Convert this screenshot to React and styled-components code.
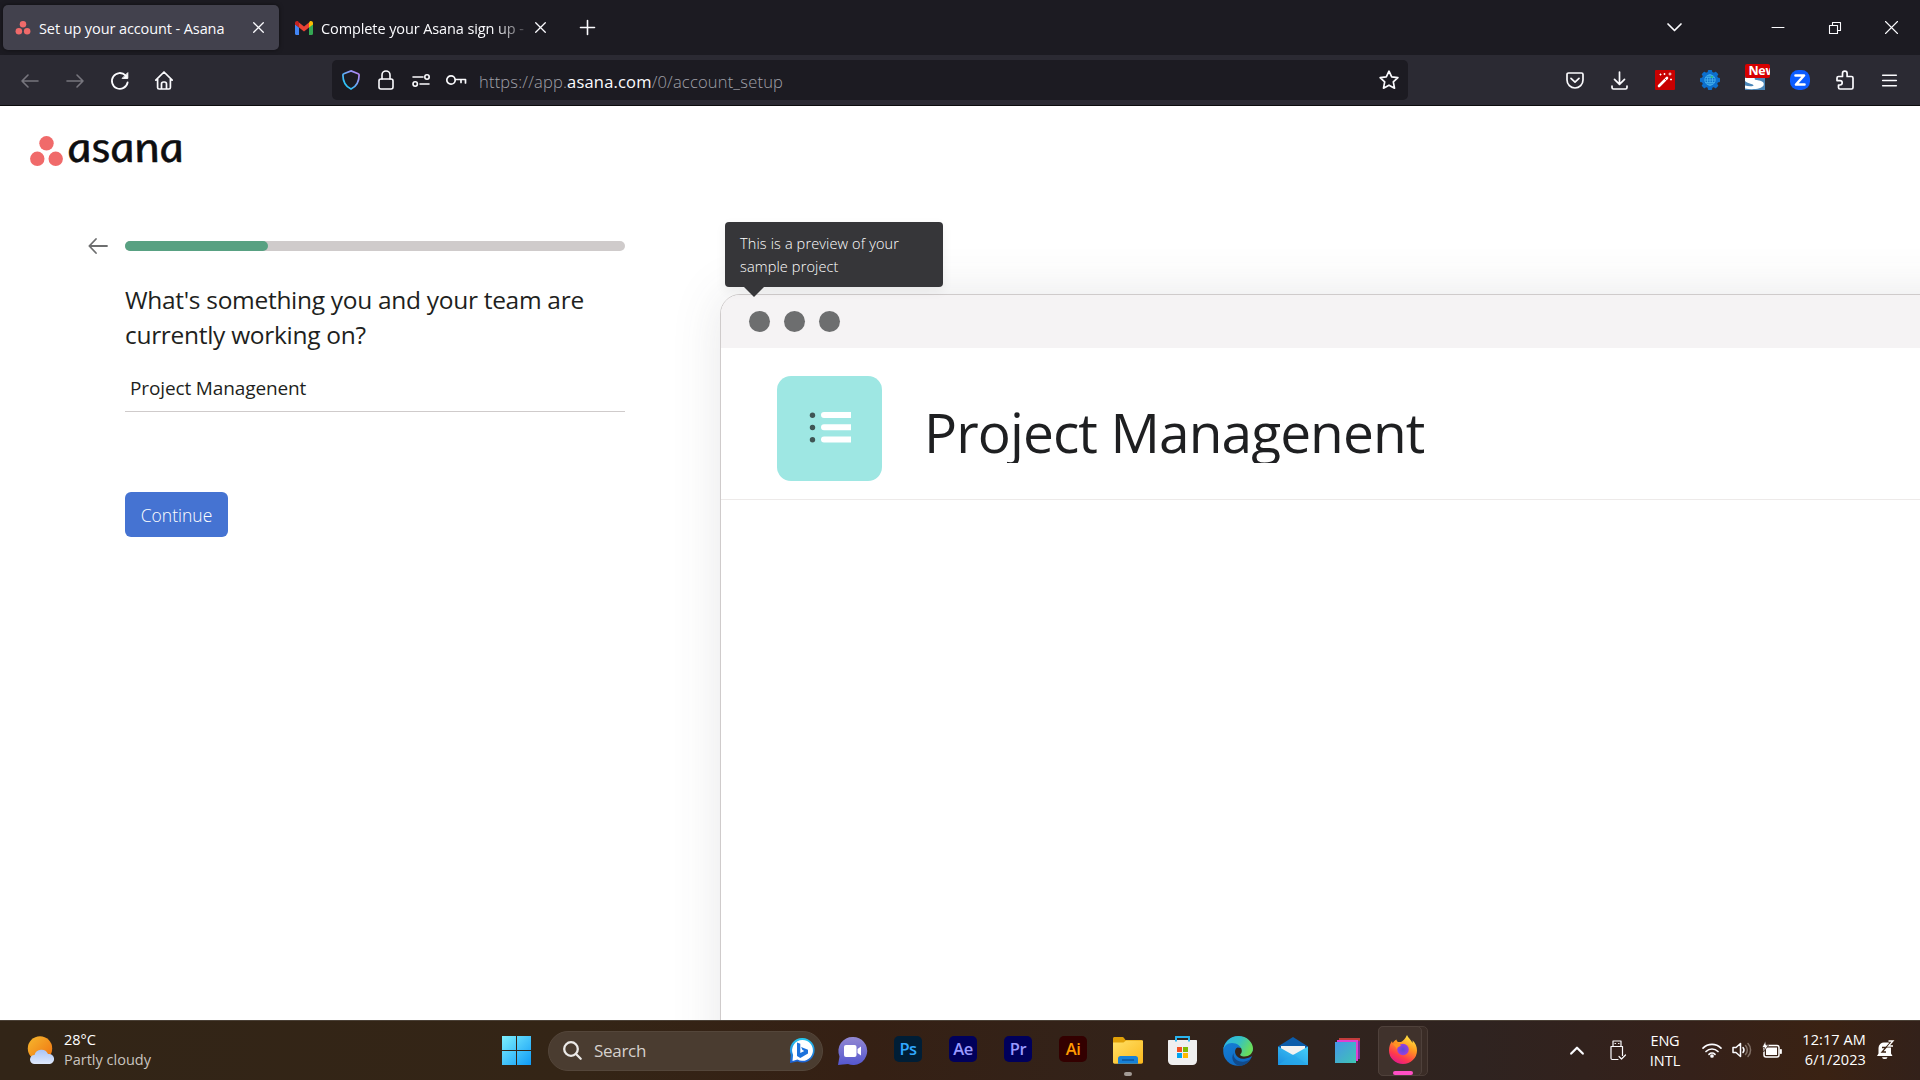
import React from "react";
import styled, { createGlobalStyle } from "styled-components";

const Global = createGlobalStyle`
  * { box-sizing: border-box; }
  body { margin: 0; background: #fff; overflow: hidden; }
  svg { display: block; flex: none; overflow: visible; }
`;

const Screen = styled.div`
  width: 1920px;
  height: 1080px;
  display: flex;
  flex-direction: column;
  overflow: hidden;
  font-family: "Open Sans", "Noto Sans", sans-serif;
`;

/* ---------- text ---------- */
const Label = styled.span`
  display: block;
  white-space: nowrap;
  font-size: ${(p) => p.$size}px;
  line-height: ${(p) => p.$lh || 20}px;
  letter-spacing: ${(p) => p.$ls || 0}px;
  color: ${(p) => p.$color || "#fff"};
  font-weight: ${(p) => p.$weight || 400};
`;

/* ---------- tab strip ---------- */
const TabStrip = styled.div`
  height: 55px;
  flex: none;
  background: #1c1b22;
  display: flex;
  align-items: center;
  padding-left: 3px;
`;
const Tab = styled.div`
  width: ${(p) => p.$width}px;
  height: 45px;
  display: flex;
  align-items: center;
  padding-left: ${(p) => p.$pad}px;
  border-radius: 5px;
  background: ${(p) => (p.$active ? "#42414d" : "transparent")};
  box-shadow: ${(p) => (p.$active ? "0 0 4px rgba(0,0,0,.5)" : "none")};
`;
const TabTitle = styled(Label)`
  width: ${(p) => p.$width}px;
  overflow: hidden;
  margin-left: 8px;
  padding-top: 2px;
  mask-image: ${(p) => (p.$fade ? "linear-gradient(90deg,#000 84%,transparent 102%)" : "none")};
`;
const WindowControls = styled.div`
  margin-left: auto;
  display: grid;
  align-items: center;
  justify-items: center;
  grid-template-columns: 150px 57px 57px 57px;
`;

/* ---------- toolbar ---------- */
const Toolbar = styled.div`
  height: 51px;
  flex: none;
  background: #2b2a33;
  border-bottom: 1px solid #0c0c0d;
  display: flex;
  align-items: center;
`;
const NavButtons = styled.div`
  width: 332px;
  display: flex;
  padding: 1px 0 0 7px;
`;
const IconCell = styled.div`
  width: ${(p) => p.$w || 45}px;
  height: 40px;
  display: flex;
  align-items: center;
  justify-content: center;
`;
const UrlBar = styled.div`
  width: 1076px;
  height: 40px;
  border-radius: 5px;
  background: #1c1b22;
  display: flex;
  align-items: center;
  padding-left: 1px;
`;
const UrlText = styled(Label)`
  margin-left: 5px;
  padding-top: 3px;
  flex: 1;
  b { font-weight: 400; color: #fbfbfe; }
`;
const Extensions = styled.div`
  margin-left: auto;
  display: flex;
  padding-right: 8px;
`;

/* ---------- page ---------- */
const Page = styled.main`
  height: 914px;
  flex: none;
  display: flex;
  overflow: hidden;
  background: #fff;
`;
const FormColumn = styled.section`
  width: 720px;
  flex: none;
`;
const Brand = styled.div`
  display: flex;
  height: 72px;
  padding: 30px 0 0 30px;
`;
const BrandName = styled.span`
  margin-left: 6px;
  font-family: Lato, sans-serif;
  font-style: italic;
  font-weight: 400;
  font-size: 42.5px;
  line-height: 20px;
  transform: scaleX(1.11) skewX(8deg);
  transform-origin: 0 24px;
  -webkit-text-stroke: 0.5px #0d0e10;
  color: #0d0e10;
`;
const StepRow = styled.div`
  display: flex;
  align-items: center;
  margin-top: 58px;
  height: 20px;
  padding-left: 88px;
  gap: 17px;
`;
const Track = styled.div`
  width: 500px;
  height: 10px;
  border-radius: 5px;
  background: #cfcbcb;
`;
const Fill = styled.div`
  width: 143px;
  height: 10px;
  border-radius: 5px;
  background: #58a182;
`;
const FormBody = styled.div`
  width: 500px;
  margin-left: 125px;
`;
const Question = styled.h1`
  margin: 26px 0 0;
  font-size: 24.5px;
  font-weight: 400;
  line-height: 35px;
  letter-spacing: ${(p) => p.$ls}px;
  color: #1e1f21;
  white-space: nowrap;
`;
const Field = styled.div`
  height: 48px;
  margin-top: 12px;
  padding: 12px 0 0 5px;
  border-bottom: 1px solid #cfcbcb;
`;
const Submit = styled.button`
  margin: 80px 0 0;
  width: 103px;
  height: 45px;
  padding: 0;
  border: 0;
  border-radius: 6px;
  background: #4573d2;
  display: flex;
  align-items: center;
  justify-content: center;
  font-family: inherit;
`;
const PreviewColumn = styled.section`
  flex: 1;
  padding-top: 188px;
  position: relative;
`;
const PreviewWindow = styled.div`
  width: 1300px;
  height: 900px;
  border: 1px solid #cfcbcb;
  border-radius: 20px 0 0 0;
  overflow: hidden;
  background: #fff;
  box-shadow: 0 0 50px rgba(80, 80, 82, 0.13);
`;
const PreviewBar = styled.div`
  height: 53px;
  background: #f5f3f4;
  display: flex;
  align-items: center;
  gap: 14px;
  padding-left: 28px;
`;
const Dot = styled.i`
  width: 21px;
  height: 21px;
  border-radius: 50%;
  background: #6d6e6f;
`;
const ProjectHeader = styled.div`
  height: 152px;
  border-bottom: 1px solid #edeae9;
  display: flex;
  padding: 28px 0 0 56px;
`;
const ProjectTile = styled.div`
  width: 105px;
  height: 105px;
  border-radius: 14px;
  background: #9ee7e3;
  display: flex;
  align-items: center;
  justify-content: center;
  padding-bottom: 2px;
`;
const ProjectTitle = styled.div`
  margin: 20px 0 0 42px;
  height: 67px;
  overflow: hidden;
  font-size: 55px;
  line-height: 71px;
  letter-spacing: ${(p) => p.$ls}px;
  color: #1e1f21;
  white-space: nowrap;
`;
const Tooltip = styled.div`
  position: absolute;
  left: 5px;
  top: 116px;
  width: 218px;
  height: 65px;
  padding: 10px 15px;
  border-radius: 4px;
  background: #363639;
  box-shadow: 0 4px 12px rgba(0, 0, 0, 0.06);
  &::after {
    content: "";
    position: absolute;
    left: 19px;
    top: 65px;
    border: 10.5px solid transparent;
    border-bottom: 0;
    border-top-color: #363639;
  }
`;

/* ---------- taskbar ---------- */
const Taskbar = styled.footer`
  height: 60px;
  flex: none;
  border-top: 1px solid #4a4036;
  background: linear-gradient(90deg, #322517 0%, #342516 30%, #352014 45%, #33231a 60%, #2f2320 77%, #35211a 88%, #3a2213 95%, #33211a 100%);
  display: flex;
`;
const Weather = styled.div`
  width: 489px;
  display: flex;
  padding: 8px 0 0 27px;
  gap: 9px;
`;
const Stack = styled.div`
  display: flex;
  flex-direction: column;
  align-items: ${(p) => p.$align || "flex-start"};
  padding-top: ${(p) => p.$top || 0}px;
  justify-self: ${(p) => (p.$align === "flex-end" ? "end" : "center")};
`;
const Apps = styled.div`
  display: flex;
  align-items: center;
  width: 945px;
`;
const AppCell = styled.div`
  width: 55px;
  height: 58px;
  flex: none;
  display: flex;
  align-items: center;
  justify-content: center;
  position: relative;
`;
const Running = styled.i`
  position: absolute;
  bottom: ${(p) => (p.$flush ? 0 : 4)}px;
  width: ${(p) => p.$w}px;
  height: 4px;
  border-radius: 2px;
  background: ${(p) => p.$color};
`;
const SearchPill = styled.div`
  width: 275px;
  height: 40px;
  margin: 0 2px 0 4px;
  flex: none;
  border-radius: 20px;
  border: 1px solid #54463a;
  background: #4a3c30;
  display: flex;
  align-items: center;
  padding: 0 7px 0 14px;
`;
const SearchText = styled(Label)`
  flex: 1;
  margin-left: 12px;
`;
const AdobeTile = styled.div`
  width: 28px;
  height: 26px;
  margin: 0 0 3px 1px;
  border-radius: 5px;
  background: ${(p) => p.$bg};
  color: ${(p) => p.$fg};
  font-size: 16.5px;
  font-weight: 600;
  line-height: 25px;
  text-align: center;
  letter-spacing: -0.5px;
`;
const ActiveApp = styled.div`
  width: 50px;
  height: 50px;
  margin-left: 3px;
  border-radius: 5px;
  border: 1px solid #4b3d37;
  background: #3a2c26;
  display: flex;
`;
const ActiveFace = styled.div`
  width: 44px;
  height: 50px;
  margin: -1px 0 0 -1px;
  padding: 0 0 2px 5px;
  border-radius: 5px;
  border: 1px solid #4f413b;
  background: #40322c;
  display: flex;
  align-items: center;
  justify-content: center;
  position: relative;
`;
const Tray = styled.div`
  flex: 1;
  display: grid;
  grid-template-columns: 50px 32px 62px 32px 28px 32px 78px 38px;
  padding-left: 118px;
  align-items: center;
  height: 58px;
  justify-items: center;
`;

/* ---------- icons ---------- */
const Ic = ({ w = 20, h = w, vb, c = "#fbfbfe", sw = 1.6, children }) => (
  <svg width={w} height={h} viewBox={vb || `0 0 ${w} ${h}`} fill="none" stroke={c} strokeWidth={sw} strokeLinecap="round" strokeLinejoin="round">
    {children}
  </svg>
);
const AsanaDots = ({ w, h }) => (
  <svg width={w} height={h} viewBox="0 0 33 31" fill="#f06a6a">
    <circle cx="16.5" cy="7.3" r="7.2" /><circle cx="7.3" cy="22.8" r="7.2" /><circle cx="25.7" cy="22.8" r="7.2" />
  </svg>
);
const Close = () => <Ic w={11} sw={1.3}><path d="M.7.7l9.6 9.6M10.3.7L.7 10.3" /></Ic>;
const Gmail = () => (
  <svg width="18" height="14" viewBox="0 0 18 14">
    <path d="M0 2v10.8c0 .7.5 1.2 1.2 1.2H4V6.5L0 3z" fill="#4285f4" />
    <path d="M14 14h2.8c.7 0 1.2-.5 1.2-1.2V2l-4 3z" fill="#34a853" />
    <path d="M14 1.6v5L18 3.600V2c0-1.900-2-2.700-3.300-1.600z" fill="#fbbc04" />
    <path d="M4 6.600V1.600l5 3.800 5-3.800v5l-5 3.800z" fill="#ea4335" />
    <path d="M0 2v1.600l4 3v-5L3.300.4C2-.7 0 .1 0 2z" fill="#c5221f" />
  </svg>
);

function Tabs() {
  return (
    <TabStrip>
      <Tab $active $width={276} $pad={12}>
        <AsanaDots w={16} h={14} />
        <TabTitle $size={14.5} $width={214} $color="#fbfbfe" $ls={-0.1}>Set up your account - Asana</TabTitle>
        <Close />
      </Tab>
      <Tab $width={285} $pad={16}>
        <Gmail />
        <TabTitle $size={14.5} $width={207} $color="#fbfbfe" $ls={-0.1} $fade>Complete your Asana sign up - </TabTitle>
        <IconCell $w={25}><Close /></IconCell>
      </Tab>
      <IconCell $w={47}><Ic w={15} sw={1.6}><path d="M7.500.5v14M.5 7.500h14" /></Ic></IconCell>
      <WindowControls>
        <Ic w={15} h={9} sw={1.7}><path d="M1 1l6.500 6.500L14 1" /></Ic>
        <Ic w={12} h={12} sw={1}><path d="M0 5.500h12" /></Ic>
        <Ic w={12} h={12} sw={1.1}><path d="M.5 3.500h8v8h-8zM3.500 3.500v-3h8v8h-3" /></Ic>
        <Ic w={13} h={13} sw={1.1}><path d="M.5.5l12 12M12.500.5l-12 12" /></Ic>
      </WindowControls>
    </TabStrip>
  );
}

function BrowserToolbar() {
  return (
    <Toolbar>
      <NavButtons>
        <IconCell><Ic w={18} h={14} c="#77767e"><path d="M17 7H1M7 1L1 7l6 6" /></Ic></IconCell>
        <IconCell><Ic w={18} h={14} c="#77767e"><path d="M1 7h16M11 1l6 6-6 6" /></Ic></IconCell>
        <IconCell><Ic w={18} h={18} sw={1.8}><path d="M16.600 10.500A7.900 7.900 0 1 1 14.500 3.400" /><path d="M16.800 1v5.400h-5.300z" fill="#fbfbfe" strokeWidth="1" /></Ic></IconCell>
        <IconCell $w={44}><Ic w={18} h={19} sw={1.700}><path d="M.8 9.200L9 1l8.200 8.200M2.600 8v8.500c0 .9.6 1.500 1.500 1.500h9.800c.9 0 1.500-.6 1.500-1.500V8M6.500 18v-5c0-1.200.8-2 2-2h1c1.200 0 2 .8 2 2v5" /></Ic></IconCell>
      </NavButtons>
      <UrlBar>
        <IconCell $w={36}>
          <svg width="18" height="20" viewBox="0 0 18 20"><defs><linearGradient id="sh" x1="0" y1="1" x2="1" y2="0"><stop offset=".2" stopColor="#2bc4f8" /><stop offset=".9" stopColor="#b487f5" /></linearGradient></defs><path d="M9 .9l7.200 2.900c.6.200.9.600.9 1.200C17.100 12 14.500 16.500 9 19.100 3.500 16.500.9 12 .9 5c0-.6.300-1 .9-1.200z" fill="none" stroke="url(#sh)" strokeWidth="1.700" /></svg>
        </IconCell>
        <IconCell $w={34}><Ic w={16} h={20} sw={1.600}><rect x="1" y="9" width="14" height="10" rx="2" /><path d="M4 9V5a4 4 0 0 1 8 0v4" /></Ic></IconCell>
        <IconCell $w={35}><Ic w={18} h={13}><path d="M1 3h10M8 10h9" /><circle cx="15" cy="3" r="2.200" /><circle cx="3.200" cy="10" r="2.200" /></Ic></IconCell>
        <IconCell $w={36}><Ic w={20} h={10} sw={1.700}><circle cx="5" cy="5" r="4.200" /><path d="M9.500 4.500h10V8M15 4.500v3" /></Ic></IconCell>
        <UrlText $size={16.500} $weight={300} $color="#a0a0a8" $ls={0.19}>https://app.<b>asana.com</b>/0/account_setup</UrlText>
        <IconCell $w={38}><Ic w={20} h={20} sw={1.700}><path d="M10 1.200l2.700 5.700 6.200.8-4.600 4.200 1.200 6.300-5.500-3-5.500 3 1.200-6.300L1.100 7.700l6.200-.8z" /></Ic></IconCell>
      </UrlBar>
      <Extensions>
        <IconCell><Ic w={18} h={17} sw={1.700}><path d="M2.500 1h13c.9 0 1.500.6 1.500 1.500V8a8 8 0 0 1-16 0V2.500C1 1.600 1.600 1 2.500 1zM5 6.300l4 3.900 4-3.900" /></Ic></IconCell>
        <IconCell><Ic w={17} h={19} sw={1.700}><path d="M8.500 1v12M3.500 8.300l5 5 5-5M1 15v1.500c0 .9.6 1.500 1.500 1.500h12c.9 0 1.500-.6 1.500-1.500V15" /></Ic></IconCell>
        <IconCell>
          <svg width="20" height="20"><rect width="20" height="20" fill="#c80000" rx="1" /><path d="M4 16l8-8" stroke="#fff" strokeWidth="2.600" strokeLinecap="round" /><path d="M9.500 8.500l2 2" stroke="#c80000" strokeWidth=".8" /><path d="M5.500 3.500v2M4.500 4.500h2M9.500 3v2M8.500 4h2M15 2.500v3M13.500 4h3M16 8.500v2M15 9.500h2" stroke="#fff" strokeWidth=".9" /></svg>
        </IconCell>
        <IconCell>
          <svg width="20" height="20" viewBox="-10 -10 20 20"><circle r="8.300" fill="#0c6fcd" /><g fill="#0c6fcd">{[0, 45, 90, 135, 180, 225, 270, 315].map((a) => <rect key={a} x="-2.200" y="-10" width="4.400" height="5" rx="1" transform={`rotate(${a})`} />)}</g><g fill="none" stroke="#45b0ec" strokeWidth=".9"><circle r="5.200" /><path d="M-5 0H5M0-5V5M-4.400-2.600h8.800M-4.400 2.600h8.800" /><ellipse rx="2.500" ry="5.200" /></g><circle cx="1.800" cy="-3" r="1" fill="#29c76f" /></svg>
        </IconCell>
        <IconCell>
          <svg width="20" height="20"><defs><clipPath id="badge"><rect x="0" y="-6" width="25" height="14" rx="2" /></clipPath></defs><rect width="20" height="20" fill="#4a86b8" /><path d="M0 8h10c-1.500 1.500 1 2 4 2.500 4 .8 5.500 2.500 4.500 5C17 19 7 20 0 18.500v-3c4 1.200 9 1 8.500-.3C8 13.800 2 13.500 0 11z" fill="#fff" /><g clipPath="url(#badge)"><rect x="0" y="-6" width="25" height="14" fill="#d70000" /><text x="3.500" y="4.800" fill="#fff" fontSize="12.500" fontWeight="700" fontFamily="Open Sans, sans-serif" letterSpacing="-.3">New</text></g></svg>
        </IconCell>
        <IconCell>
          <svg width="20" height="20"><rect width="20" height="20" rx="8.500" fill="#0b5cff" /><path d="M5.500 5.500h8.500l-8 9H14.500" fill="none" stroke="#fff" strokeWidth="2.600" strokeLinejoin="round" strokeLinecap="round" /></svg>
        </IconCell>
        <IconCell><Ic w={18} h={20} sw={1.700}><path d="M2.500 6.500H6.500V3.500a2.300 2.300 0 0 1 4.600 0v3h4.400c.9 0 1.500.6 1.500 1.500v9.500c0 .9-.6 1.500-1.500 1.500H4C3.100 19 2.500 18.400 2.500 17.500V15H4a2.200 2.200 0 0 0 0-4.400H1V8c0-.9.600-1.500 1.500-1.500z" /></Ic></IconCell>
        <IconCell><Ic w={15} h={13}><path d="M.7 1.200h13.600M.7 6.500h13.600M.7 11.800h13.600" /></Ic></IconCell>
      </Extensions>
    </Toolbar>
  );
}

function SetupPage() {
  return (
    <Page>
      <FormColumn>
        <Brand>
          <AsanaDots w={33} h={31} />
          <BrandName>asana</BrandName>
        </Brand>
        <StepRow>
          <Ic w={20} h={16} c="#6d6e6f" sw={1.800}><path d="M19 8H1.500M8 1L1.300 8 8 15" /></Ic>
          <Track><Fill /></Track>
        </StepRow>
        <FormBody>
          <Question $ls={-0.3}>What's something you and your team are<br />currently working on?</Question>
          <Field><Label $size={19} $lh={24} $ls={-0.13} $color="#1e1f21">Project Managenent</Label></Field>
          <Submit><Label $size={17.500} $lh={24} $weight={300}>Continue</Label></Submit>
        </FormBody>
      </FormColumn>
      <PreviewColumn>
        <PreviewWindow>
          <PreviewBar><Dot /><Dot /><Dot /></PreviewBar>
          <ProjectHeader>
            <ProjectTile>
              <svg width="42" height="32" viewBox="0 0 42 32"><g fill="#3f5554"><circle cx="3.500" cy="3.200" r="2.700" /><circle cx="3.500" cy="15.500" r="2.700" /><circle cx="3.500" cy="27.800" r="2.700" /></g><path d="M15 0h27v6H15a3 3 0 0 1 0-6zM15 12.300h27v6H15a3 3 0 0 1 0-6zM15 24.600h27v6H15a3 3 0 0 1 0-6z" fill="#fff" /></svg>
            </ProjectTile>
            <ProjectTitle $ls={-0.9}>Project Managenent</ProjectTitle>
          </ProjectHeader>
        </PreviewWindow>
        <Tooltip><Label $size={14.500} $lh={23} $ls={0.14} $weight={300}>This is a preview of your</Label><Label $size={14.500} $lh={23} $ls={0.14} $weight={300}>sample project</Label></Tooltip>
      </PreviewColumn>
    </Page>
  );
}

function WindowsTaskbar() {
  return (
    <Taskbar>
      <Weather>
        <svg width="28" height="40" viewBox="0 0 28 40"><defs><linearGradient id="sun" x1="0" y1="0" x2="1" y2="1"><stop stopColor="#f5b82e" /><stop offset="1" stopColor="#f0700f" /></linearGradient><linearGradient id="cl" x1="0" y1="0" x2="0" y2="1"><stop stopColor="#a9c4f7" /><stop offset="1" stopColor="#dfe9fb" /></linearGradient></defs><circle cx="13" cy="19.500" r="12.200" fill="url(#sun)" /><path d="M7.500 35a4.500 4.500 0 0 1 0-9 7.200 7.200 0 0 1 13.500-1 5 5 0 0 1 2 10z" fill="url(#cl)" /></svg>
        <Stack $top={1}><Label $size={14.500}>28°C</Label><Label $size={14.500} $color="#c9c4bf">Partly cloudy</Label></Stack>
      </Weather>
      <Apps>
        <AppCell>
          <svg width="29" height="29"><defs><linearGradient id="win" x1="0" y1="0" x2="1" y2="1" ><stop stopColor="#7df0fd" /><stop offset="1" stopColor="#0f9bf7" /></linearGradient></defs><path d="M0 0h14v14H0zM15 0h14v14H15zM0 15h14v14H0zM15 15h14v14H15z" fill="url(#win)" /></svg>
        </AppCell>
        <SearchPill>
          <Ic w={19} h={19} sw={2.300} c="#eceae8"><circle cx="8" cy="8" r="6.800" /><path d="M13 13l4.700 4.700" /></Ic>
          <SearchText $size={17} $lh={24} $ls={-0.3} $color="#d6d1cd">Search</SearchText>
          <svg width="25" height="25"><defs><linearGradient id="bing" x1="0" y1="0" x2="0" y2="1"><stop stopColor="#25c8ee" /><stop offset="1" stopColor="#1b5fd6" /></linearGradient></defs><path d="M12.500 0a12.300 12.300 0 1 1-5 23.600L0 25l.8-8A12.300 12.300 0 0 1 12.500 0z" fill="url(#bing)" /><path d="M12.500 2a10.400 10.400 0 1 1-5 19.500L2.500 23l.6-6A10.400 10.400 0 0 1 12.500 2z" fill="#fff" /><path d="M7 4.500l3.300 1.200v9.300l4-2-1.900-.9-1.300-3 6.900 2.700v3.600l-7.700 4.600L7 18z" fill="#1c72dc" /></svg>
        </SearchPill>
        <AppCell>
          <svg width="29" height="28"><defs><linearGradient id="chat" x1="0" y1="0" x2="0" y2="1"><stop stopColor="#9288d2" /><stop offset="1" stopColor="#5557cf" /></linearGradient></defs><path d="M15 0a14 14 0 1 1-5 27L0 28l1.500-8.500A14 14 0 0 1 15 0z" fill="url(#chat)" /><rect x="6" y="8" width="12.500" height="12" rx="2" fill="#fff" /><path d="M19.500 12l3.500-2.500v9L19.500 16z" fill="#fff" /></svg>
        </AppCell>
        <AppCell><AdobeTile $bg="#001e36" $fg="#31a8ff">Ps</AdobeTile></AppCell>
        <AppCell><AdobeTile $bg="#00005b" $fg="#9999ff">Ae</AdobeTile></AppCell>
        <AppCell><AdobeTile $bg="#00005b" $fg="#9999ff">Pr</AdobeTile></AppCell>
        <AppCell><AdobeTile $bg="#330000" $fg="#ff9a00">Ai</AdobeTile></AppCell>
        <AppCell>
          <svg width="30" height="27"><defs><linearGradient id="fold" x1="0" y1="0" x2="1" y2="1"><stop stopColor="#ffe066" /><stop offset="1" stopColor="#fbb81c" /></linearGradient></defs><path d="M0 1.500C0 .6.600 0 1.500 0H9c1 0 1.500.4 2 1l1.500 2H28c1 0 1.500.6 1.500 1.500V12H0z" fill="#e0a008" /><path d="M0 5.500h10.500L13 3.500h17V25c0 1-.6 1.700-1.700 1.700H1.700C.6 26.700 0 26 0 25z" fill="url(#fold)" /><path d="M5 26.700V21.500c0-1.500 1-2.500 2.500-2.500h15c1.500 0 2.500 1 2.500 2.500v5.200z" fill="#1681d8" /><path d="M9 23h12" stroke="#0b4f94" strokeWidth="1.300" /></svg>
          <Running $w={8} $color="#a39b95" />
        </AppCell>
        <AppCell>
          <svg width="29" height="29"><path d="M8 5V1h13v4" fill="none" stroke="#2ab5ef" strokeWidth="1.900" /><path d="M0 5c0-.6.400-1 1-1h27c.6 0 1 .4 1 1v19.500a4.500 4.500 0 0 1-4.500 4.500h-20A4.500 4.500 0 0 1 0 24.500z" fill="#efefef" /><path d="M8 1.500V5.500M21 1.500V5.500" stroke="#2ab5ef" strokeWidth="1.900" /><path d="M9 11h5v5H9z" fill="#f25022" /><path d="M15 11h5v5h-5z" fill="#7fba00" /><path d="M9 17h5v5H9z" fill="#00a4ef" /><path d="M15 17h5v5h-5z" fill="#ffb900" /></svg>
        </AppCell>
        <AppCell>
          <svg width="30" height="30" viewBox="0 0 30 30"><defs><linearGradient id="e1" x1="0" y1="0" x2="1" y2=".4"><stop stopColor="#2bb5e8" /><stop offset=".55" stopColor="#35c1c5" /><stop offset="1" stopColor="#68dd5c" /></linearGradient><linearGradient id="e2" x1="0" y1="0" x2=".5" y2="1"><stop stopColor="#1683d8" /><stop offset="1" stopColor="#0f6ac4" /></linearGradient></defs><circle cx="15" cy="15" r="14.800" fill="url(#e2)" /><path d="M10.500 17c-.5 6.500 6 9.500 11 8.500 3-.6 5.500-2 6.500-2.700-2 3.700-5.500 6-9 6.900-7 .5-12-6-8.500-12.700z" fill="#114a8b" /><path d="M14.500 11.500c-2.500 1-3 4-2 6.500 1.500 4 6 5.500 10 4.500 3-.6 5-1.500 6.500-2.500l2-4-6-3z" fill="#35241a" /><path d="M0 14.500C1 6 7.500 0 15.500 0 24 0 30 6.500 30 12.500c0 5-4 8-8.500 8-3.500 0-5-1.500-4-2.500.8-.8 1.300-1.800 1.300-3.300C18.800 10.500 14 7 9 7S1 10 0 14.500z" fill="url(#e1)" /></svg>
        </AppCell>
        <AppCell>
          <svg width="30" height="28"><defs><linearGradient id="ml" x1="0" y1="1" x2="1" y2="0"><stop stopColor="#1a8ee0" /><stop offset="1" stopColor="#45d0fa" /></linearGradient></defs><path d="M0 9.500L15 0l15 9.500V14H0z" fill="#0b5cab" /><path d="M3 9h24v8l-12 6L3 17z" fill="#f2f2f2" /><path d="M0 9.500L15 18l15-8.500V28H0z" fill="url(#ml)" /><path d="M0 28l15-10.500L30 28z" fill="#27a7ea" opacity=".7" /></svg>
        </AppCell>
        <AppCell>
          <svg width="25" height="25"><defs><linearGradient id="sq" x1="0" y1="0" x2="1" y2="1"><stop stopColor="#4596e8" /><stop offset="1" stopColor="#3fc4b4" /></linearGradient></defs><rect x="4" width="21" height="21" fill="#c23c3c" /><rect x="21" y="3" width="4" height="18" fill="#7b2f9e" /><rect x="2" y="2" width="21" height="21" fill="#e03fd0" /><rect y="4" width="21" height="21" fill="url(#sq)" /></svg>
        </AppCell>
        <ActiveApp>
          <ActiveFace>
            <svg width="28" height="29" viewBox="0 0 28 29"><defs><linearGradient id="fx" x1=".8" y1="0" x2=".3" y2="1"><stop stopColor="#fff04a" /><stop offset=".4" stopColor="#ff9a1f" /><stop offset=".75" stopColor="#ff3b4b" /><stop offset="1" stopColor="#e3178f" /></linearGradient><radialGradient id="fp"><stop stopColor="#5b4bd6" /><stop offset="1" stopColor="#9a3fe0" /></radialGradient></defs><path d="M18 0c1 3 4 4.500 5.500 8 .3-1 .2-2 0-2.700C26.500 8 28 12 28 15.500A14 13.500 0 0 1 0 15.500c0-4 1.200-6.800 3-9.500.1 1 .4 1.700.8 2C5 6 6.500 5 7.500 4.500c0 1.200.7 2 1.500 2.500h3c2-.8 4.500-3.500 6-7z" fill="url(#fx)" /><circle cx="14" cy="14.500" r="5.800" fill="url(#fp)" /><path d="M4 9c3-1.500 6 0 8 1.500-1.500 1.500-4 1-4 4-1-2.500-3-3.500-4-5.500z" fill="#ff9321" /></svg>
            <Running $w={20} $color="#ff4fc4" $flush />
          </ActiveFace>
        </ActiveApp>
      </Apps>
      <Tray>
        <Ic w={14} h={9} sw={2.200}><path d="M1.200 7.600L7 1.700l5.800 5.900" /></Ic>
        <Ic w={16} h={21} sw={1.200}><path d="M3 6V1h8v5M1 6.500h11.500v9M8 19.500H2.200c-.7 0-1.200-.5-1.200-1.200V6.500M5 3.500h.6M8.500 3.500H9M9 16.500l2.500 2.500L15.500 15" /></Ic>
        <Stack $align="center" $top={1}><Label $size={14.500} $ls={-0.2}>ENG</Label><Label $size={14.500}>INTL</Label></Stack>
        <Ic w={20} h={16} sw={1.700}><path d="M1 6.200a12.700 12.700 0 0 1 18 0M4 9.500a8.500 8.500 0 0 1 12 0M7 12.300a4.300 4.300 0 0 1 6 0" /><circle cx="10" cy="14" r="1" fill="#fff" /></Ic>
        <Ic w={20} h={16} sw={1.500}><path d="M1 5.500h3L8.500 1.500v13L4 10.500H1zM11 5.500a4 4 0 0 1 0 5" /><path d="M13.500 3.500a6.500 6.500 0 0 1 0 9M16 1.500a9.500 9.500 0 0 1 0 13" stroke="#806f65" /></Ic>
        <svg width="20" height="17"><rect x="2" y="3.500" width="15" height="11.500" rx="2" fill="none" stroke="#fff" strokeWidth="1.500" /><rect x="4" y="5.500" width="11" height="7.500" fill="#fff" /><path d="M18 7.500h1.500v4H18z" fill="#fff" stroke="#fff" strokeWidth=".7" /><path d="M3.500-1L0 5.500h2.500L1.500 10 6.500 3H4z" fill="#fff" stroke="#36221a" strokeWidth=".7" /></svg>
        <Stack $align="flex-end" $top={0}><Label $size={14.500} $ls={0.1}>12:17 AM</Label><Label $size={14.500} $ls={0.1}>6/1/2023</Label></Stack>
        <svg width="18" height="20"><path d="M1 16l1.500-2.500V8a5.500 5.500 0 0 1 6.500-5.500h6V10v3.500L16.500 16z" fill="#fff" /><path d="M6 17.200h5.500a2.800 2.300 0 0 1-5.500 0z" fill="#fff" /><path d="M6 7.500h4l-4 4.500h4" fill="none" stroke="#3a2213" strokeWidth="1.300" /><path d="M12.500 1h4.500l-4.500 5H17" fill="none" stroke="#3a2213" strokeWidth="3" /><path d="M12.500 1h4.500l-4.500 5H17" fill="none" stroke="#fff" strokeWidth="1.300" /></svg>
      </Tray>
    </Taskbar>
  );
}

export default function App() {
  return (
    <>
      <Global />
      <Screen>
        <Tabs />
        <BrowserToolbar />
        <SetupPage />
        <WindowsTaskbar />
      </Screen>
    </>
  );
}
